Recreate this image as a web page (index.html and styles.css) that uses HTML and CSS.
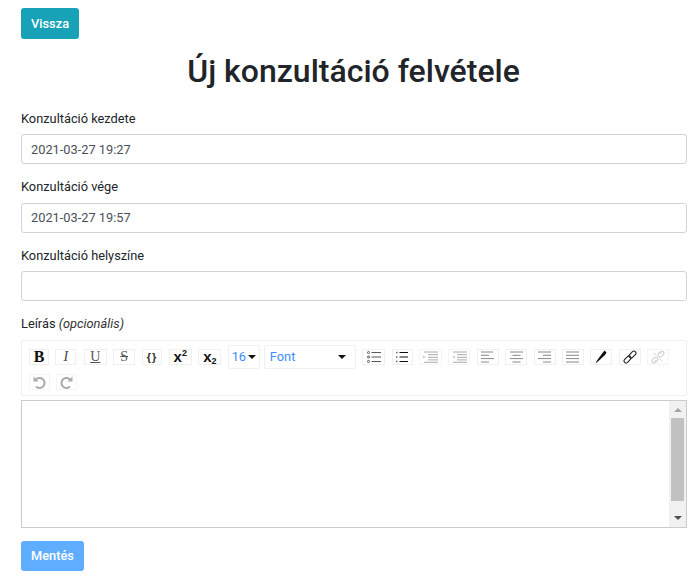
FILE: index.html
```html
<!DOCTYPE html>
<html lang="hu">
<head>
<meta charset="utf-8">
<title>Új konzultáció felvétele</title>
<link rel="stylesheet" href="styles.css">
</head>
<body>
<main class="page">
  <a class="btn btn-info">Vissza</a>
  <h1 class="title">Új konzultáció felvétele</h1>
  <form class="form">
    <div class="field">
      <label class="label">Konzultáció kezdete</label>
      <input class="input" type="text" value="2021-03-27 19:27">
    </div>
    <div class="field">
      <label class="label">Konzultáció vége</label>
      <input class="input" type="text" value="2021-03-27 19:57">
    </div>
    <div class="field">
      <label class="label">Konzultáció helyszíne</label>
      <input class="input" type="text">
    </div>
    <div class="field field-editor">
      <label class="label">Leírás <em>(opcionális)</em></label>
      <div class="toolbar">
        <button type="button" class="tb tb-b">B</button>
        <button type="button" class="tb tb-i">I</button>
        <button type="button" class="tb tb-u">U</button>
        <button type="button" class="tb tb-s">S</button>
        <button type="button" class="tb tb-c">{}</button>
        <button type="button" class="tb tb-x"><span>x<sup>2</sup></span></button>
        <button type="button" class="tb tb-x"><span>x<sub>2</sub></span></button>
        <button type="button" class="sel sel-size">16<span class="caret"></span></button>
        <button type="button" class="sel sel-font">Font<span class="caret"></span></button>
        <button type="button" class="tb tb-ul"><svg width="14" height="12" viewBox="0 0 14 12"><g fill="none" stroke="#444" stroke-width=".9"><circle cx="1.500" cy="1.500" r="1"/><circle cx="1.500" cy="6" r="1"/><circle cx="1.500" cy="10.500" r="1"/><path d="M4.500 1.500H14M4.500 6H14M4.500 10.500H14"/></g></svg></button>
        <button type="button" class="tb tb-ol"><svg width="12" height="12" viewBox="0 0 12 12"><g fill="none" stroke="#111"><path d="M0 1.500h2M0 6h2M0 10.500h2" stroke="#666" stroke-dasharray="1 .5" stroke-width="1.500"/><path d="M3.500 1.500H12M3.500 6H12M3.500 10.500H12" stroke-width="1.100"/></g></svg></button>
        <button type="button" class="tb tb-ind off"><svg width="15" height="12" viewBox="0 0 15 12"><path d="M1 1h14M5 3.700h10M5 6.300h10M5 8.900h10M1 11.300h14" stroke="#aaa" fill="none"/><path d="M0 4.500l3 1.500-3 1.500z" fill="#ccc"/></svg></button>
        <button type="button" class="tb tb-ind off"><svg width="15" height="12" viewBox="0 0 15 12"><path d="M1 1h14M5 3.700h10M5 6.300h10M5 8.900h10M1 11.300h14" stroke="#aaa" fill="none"/><path d="M3 4.500L0 6l3 1.500z" fill="#ccc"/></svg></button>
        <button type="button" class="tb tb-al"><svg width="13" height="12" viewBox="0 0 13 12"><path d="M0 1h12M0 4.300h8M0 7.600h13M0 11h8" stroke="#888" fill="none"/></svg></button>
        <button type="button" class="tb tb-al"><svg width="13" height="12" viewBox="0 0 13 12"><path d="M0 1h13M2.500 4.300h8M0 7.600h13M2.500 11h8" stroke="#888" fill="none"/></svg></button>
        <button type="button" class="tb tb-al"><svg width="13" height="12" viewBox="0 0 13 12"><path d="M0 1h13M5 4.300h8M0 7.600h13M5 11h8" stroke="#888" fill="none"/></svg></button>
        <button type="button" class="tb tb-al"><svg width="13" height="12" viewBox="0 0 13 12"><path d="M0 1h13M0 4.300h13M0 7.600h13M0 11h13" stroke="#888" fill="none"/></svg></button>
        <button type="button" class="tb tb-pen"><svg width="12" height="14" viewBox="0 0 12 14"><path d="M9.500 0.500l2 2-1.500 2.500L3.500 11 .5 13.500 2 10.500 7.500 3z" fill="#111"/></svg></button>
        <button type="button" class="tb tb-link"><svg width="14" height="14" viewBox="0 0 14 14"><g fill="none" stroke="#222" stroke-width="1.100" transform="rotate(-45 7 7)"><rect x="-.5" y="5" width="8" height="4" rx="2"/><rect x="6.500" y="5" width="8" height="4" rx="2"/></g></svg></button>
        <button type="button" class="tb tb-link off"><svg width="14" height="14" viewBox="0 0 14 14"><g fill="none" stroke="#cfcfcf" stroke-width="1.100" transform="rotate(-45 7 7)"><rect x="-.5" y="5" width="6.500" height="4" rx="2"/><rect x="8" y="5" width="6.500" height="4" rx="2"/></g><path d="M3 3l2 2M11 11l-2-2M10 2l-.5 2M4 12l.5-2" stroke="#cfcfcf"/></svg></button>
        <button type="button" class="tb tb-hist off"><svg width="13" height="14" viewBox="0 0 13 14"><path d="M2.500 5A5 5 0 1 1 3 11.500" fill="none" stroke="#aaa" stroke-width="2"/><path d="M.5 1.500v5h5z" fill="#aaa"/></svg></button>
        <button type="button" class="tb tb-hist off"><svg width="13" height="14" viewBox="0 0 13 14"><path d="M10.500 5A5 5 0 1 0 10 11.500" fill="none" stroke="#aaa" stroke-width="2"/><path d="M12.500 1.500v5h-5z" fill="#aaa"/></svg></button>
      </div>
      <div class="editor">
        <div class="editor-body" contenteditable="true"></div>
        <div class="scrollbar">
          <span class="arrow arrow-up"></span>
          <span class="thumb"></span>
          <span class="arrow arrow-down"></span>
        </div>
      </div>
    </div>
    <button type="button" class="btn btn-primary">Mentés</button>
  </form>
</main>
</body>
</html>
```

FILE: styles.css
```css
* { box-sizing: border-box; }
html, body { margin: 0; background: #fff; }
body {
  font-family: Roboto, "Liberation Sans", sans-serif;
  font-size: 12.8px;
  line-height: 1.5;
  color: #212529;
}
.page { padding: 8px 10px 0 21px; }
.btn {
  display: inline-block;
  height: 31px;
  padding: 0 10px;
  border: 0;
  border-radius: 3px;
  color: #fff;
  font: 500 12.8px/31px Roboto, "Liberation Sans", sans-serif;
}
.btn-info { background: #17a2b8; }
.btn-primary { display: block; background: #5eadff; width: 63px; height: 30px; padding: 0; line-height: 30px; text-align: center; }
.title {
  margin: 8px 1px 0 0;
  font-size: 32px;
  font-weight: 500;
  line-height: 48px;
  text-align: center;
}
.form { margin-top: 13.95px; }
.field { margin-bottom: 13.4px; }
.label { display: block; height: 20px; margin-bottom: 5.13px; line-height: 20px; }
.label em { color: #333; }
.input {
  display: block;
  width: 100%;
  height: 30px;
  padding: 0 9px;
  border: 1px solid #ced4da;
  border-radius: 3px;
  background: #fff;
  color: #495057;
  font: 12.8px Roboto, "Liberation Sans", sans-serif;
}
.field-editor { margin-bottom: 13px; }
.field-editor .label { margin-top: -.15px; margin-bottom: 5.28px; }
.toolbar {
  display: flex;
  flex-wrap: wrap;
  align-items: center;
  align-content: flex-start;
  column-gap: 6.4px;
  row-gap: 1px;
  height: 56px;
  margin-top: .5px;
  padding: 4px 7px 0;
  border: 1px solid #efefef;
  border-radius: 2px;
}
.tb, .sel {
  display: flex;
  align-items: center;
  justify-content: center;
  padding: 0;
  border: 1px solid #f0f0f0;
  background: #fff;
  color: #111;
  font-family: "Liberation Serif", serif;
}
.tb { width: 22px; height: 16px; margin: 4px 0; font-size: 14px; line-height: 1; }
.tb svg { display: block; }
.tb-b { width: 20px; font-weight: 700; font-size: 16px; }
.tb-i { font-style: italic; width: 21px; color: #444; }
.tb-u { text-decoration: underline; width: 23px; margin-left: 1px; color: #555; }
.tb-s { text-decoration: line-through; width: 22px; color: #555; }
.tb-c { width: 20px; margin-left: .5px; font: 700 11px "Liberation Sans", sans-serif; letter-spacing: 1px; color: #333; }
.tb-x { width: 23px; margin-left: .3px; font: 700 15px/1 "Liberation Sans", sans-serif; }
.tb-x sup, .tb-x sub { font-size: 9px; line-height: 0; }
.tb-x sub { vertical-align: -2px; }
.sel {
  height: 24px;
  border-radius: 2px;
  color: #3b8dff;
  font: 12.8px/22px Roboto, "Liberation Sans", sans-serif;
}
.sel-size { width: 32px; }
.sel-font { width: 92px; margin-left: -2.4px; justify-content: space-between; padding: 0 5px; }
.caret {
  display: inline-block;
  border: 4px solid transparent;
  border-top: 4px solid #111;
  border-bottom: 0;
  margin-left: 2px;
}
.sel-font .caret { margin-right: 4px; }
.tb-ul { width: 23px; }
.tb-ol { width: 21px; }
.tb-ind { width: 23px; }
.tb-ind + .tb-ind { width: 22px; }
.tb-hist { width: 21px; }
.off { border-color: #f5f5f5; }
.editor {
  display: flex;
  height: 128px;
  margin-top: 4px;
  border: 1px solid #ccc;
}
.editor-body { flex: 1; outline: 0; }
.scrollbar {
  position: relative;
  width: 17px;
  background: #f1f1f1;
}
.thumb {
  position: absolute;
  top: 17px;
  left: 2px;
  width: 13px;
  height: 83px;
  background: #c1c1c1;
}
.arrow { position: absolute; left: 5px; border: 4px solid transparent; }
.arrow-up { top: 7px; border-top: 0; border-bottom: 4px solid #a3a3a3; }
.arrow-down { bottom: 7px; border-bottom: 0; border-top: 4px solid #505050; }
```
